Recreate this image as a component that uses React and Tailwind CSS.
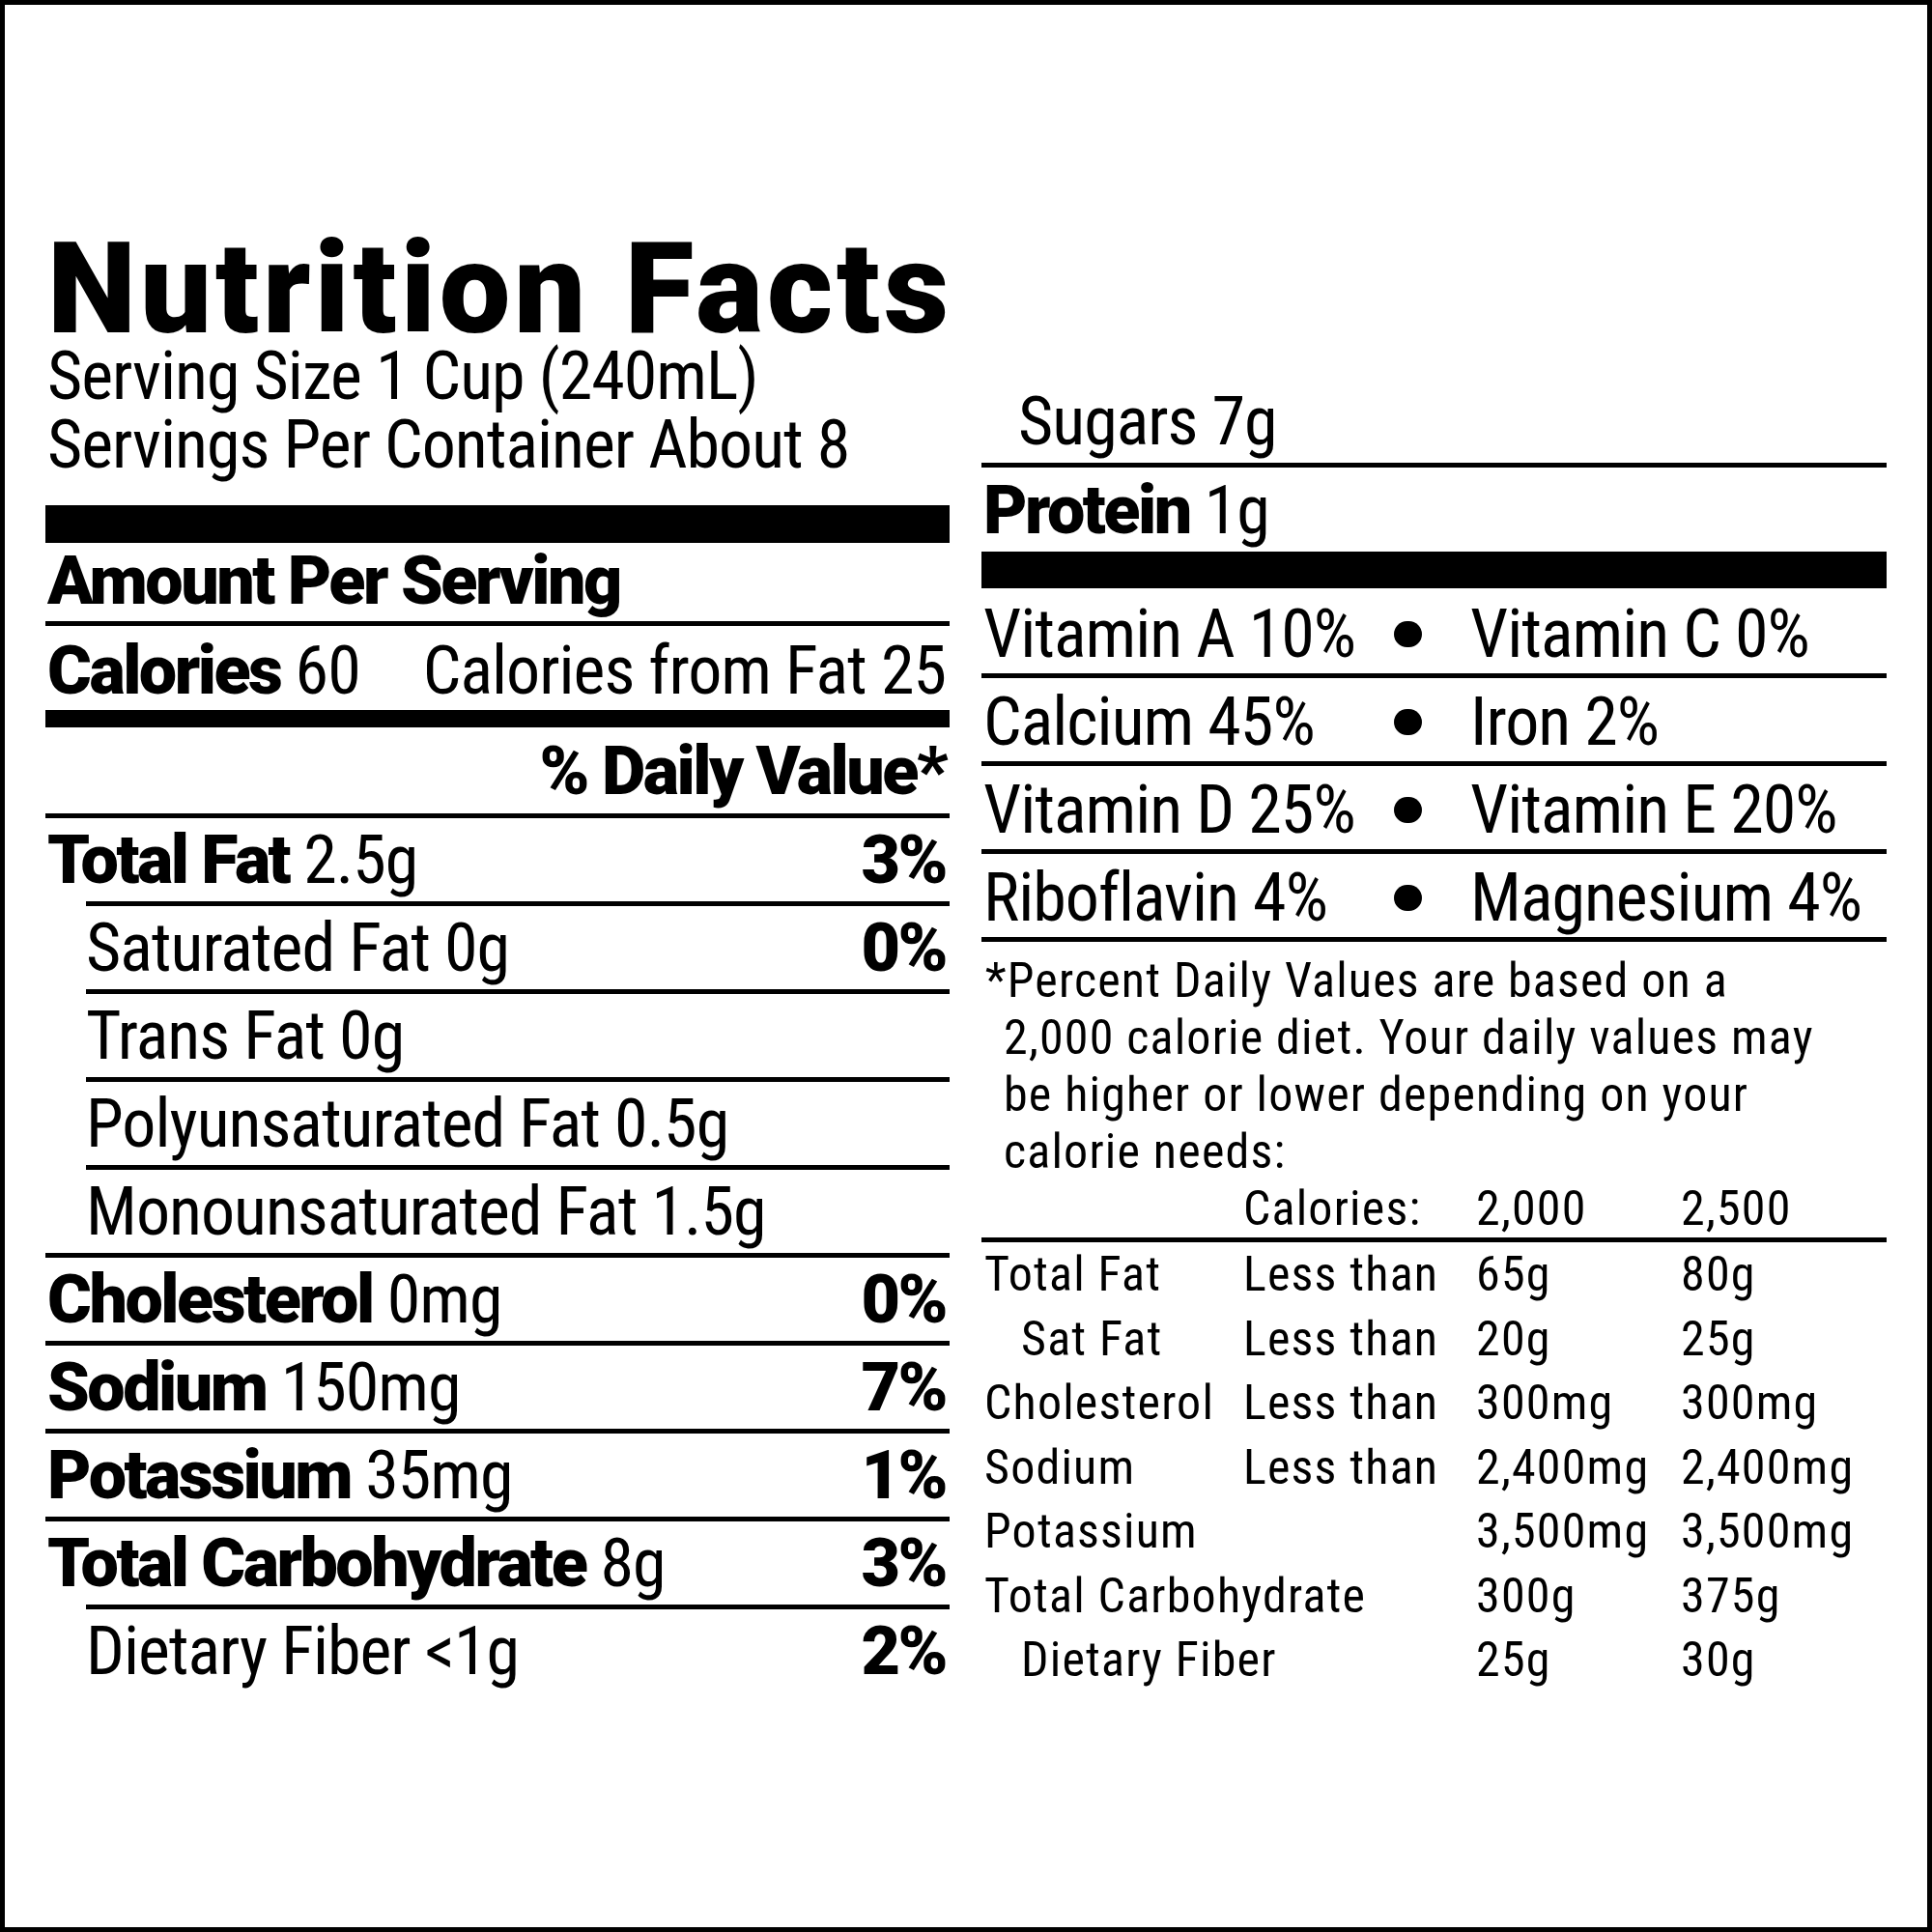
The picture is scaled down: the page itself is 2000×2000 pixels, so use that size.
const nutrients = [
  { label: "Total Fat", amount: "2.5g", dv: "3%", bold: true },
  { label: "Saturated Fat", amount: "0g", dv: "0%", sub: true },
  { label: "Trans Fat", amount: "0g", sub: true },
  { label: "Polyunsaturated Fat", amount: "0.5g", sub: true },
  { label: "Monounsaturated Fat", amount: "1.5g", sub: true },
  { label: "Cholesterol", amount: "0mg", dv: "0%", bold: true },
  { label: "Sodium", amount: "150mg", dv: "7%", bold: true },
  { label: "Potassium", amount: "35mg", dv: "1%", bold: true },
  { label: "Total Carbohydrate", amount: "8g", dv: "3%", bold: true },
  { label: "Dietary Fiber", amount: "<1g", dv: "2%", sub: true },
];

const vitamins = [
  ["Vitamin A 10%", "Vitamin C 0%"],
  ["Calcium 45%", "Iron 2%"],
  ["Vitamin D 25%", "Vitamin E 20%"],
  ["Riboflavin 4%", "Magnesium 4%"],
];

const limits = [
  { name: "Total Fat", less: true, a: "65g", b: "80g" },
  { name: "Sat Fat", less: true, a: "20g", b: "25g", sub: true },
  { name: "Cholesterol", less: true, a: "300mg", b: "300mg" },
  { name: "Sodium", less: true, a: "2,400mg", b: "2,400mg" },
  { name: "Potassium", a: "3,500mg", b: "3,500mg" },
  { name: "Total Carbohydrate", a: "300g", b: "375g" },
  { name: "Dietary Fiber", a: "25g", b: "30g", sub: true },
];

function B({ children }) {
  return <span className="font-black [font-stretch:100%] tracking-[-2.5px]">{children}</span>;
}

function NutrientRow({ item }) {
  return (
    <div
      className={
        "flex justify-between border-t-[5px] border-black pt-[8px] pb-[7px] pr-[4px] leading-[71px] " +
        (item.sub ? "ml-[42px]" : "pl-[2px]")
      }
    >
      <span>
        {item.bold ? <B>{item.label}</B> : item.label} {item.amount}
      </span>
      {item.dv && <B>{item.dv}</B>}
    </div>
  );
}

function VitaminRow({ pair, first }) {
  return (
    <div
      className={
        "flex items-center pl-[2px] leading-[71px] " +
        (first ? "pt-[12px] pb-[5px]" : "border-t-[5px] border-black pt-[10px] pb-[5px]")
      }
    >
      <span className="w-[425px]">{pair[0]}</span>
      <span className="h-[27px] w-[29px] rounded-full bg-black" />
      <span className="ml-[50px]">{pair[1]}</span>
    </div>
  );
}

export default function App() {
  return (
    <div className="flex h-[2000px] w-[2000px] items-start border-[5px] border-black bg-white text-black font-['Roboto',sans-serif] [font-stretch:75%] text-[70px] tracking-[-1px] whitespace-nowrap">
      {/* left column */}
      <div className="ml-[42px] w-[936px] pt-[239px]">
        <h1 className="pl-[2px] text-[131px] leading-[110px] font-black tracking-[4px] [font-stretch:100%]">
          Nutrition Facts
        </h1>
        <div className="pl-[2px] leading-[71px]">
          <div>Serving Size 1 Cup (240mL)</div>
          <div>Servings Per Container About 8</div>
        </div>
        <div className="mt-[27px] h-[39px] bg-black" />
        <div className="pl-[2px] pt-[4px] pb-[6px] leading-[71px]">
          <B>Amount Per Serving</B>
        </div>
        <div className="flex justify-between border-t-[5px] border-black pl-[2px] pr-[4px] pt-[11px] pb-[5px] leading-[71px]">
          <span>
            <B>Calories</B> 60
          </span>
          <span>Calories from Fat 25</span>
        </div>
        <div className="h-[18px] bg-black" />
        <div className="pt-[10px] pb-[8px] pr-[4px] text-right leading-[71px]">
          <B>% Daily Value*</B>
        </div>
        {nutrients.map((item) => (
          <NutrientRow key={item.label} item={item} />
        ))}
      </div>

      {/* right column */}
      <div className="ml-[33px] w-[937px] pt-[396px]">
        <div className="pl-[38px] pb-[7px] leading-[71px]">Sugars 7g</div>
        <div className="border-t-[5px] border-black pl-[2px] pt-[9px] pb-[7px] leading-[71px]">
          <B>Protein</B> 1g
        </div>
        <div className="h-[38px] bg-black" />
        {vitamins.map((pair, i) => (
          <VitaminRow key={pair[0]} pair={pair} first={i === 0} />
        ))}
        <div className="border-t-[5px] border-black pt-[11px] text-[50px] leading-[59px] tracking-[1.2px]">
          <p className="pl-[23px] indent-[-19px]">
            *Percent Daily Values are based on a
            <br />
            2,000 calorie diet. Your daily values may
            <br />
            be higher or lower depending on your
            <br />
            calorie needs:
          </p>
          <div className="grid grid-cols-[268px_241px_212px_1fr] border-b-[5px] border-black pl-[3px]">
            <span />
            <span>Calories:</span>
            <span>2,000</span>
            <span>2,500</span>
          </div>
          <div className="grid grid-cols-[268px_241px_212px_1fr] pl-[3px] leading-[66.5px]">
            {limits.map((r) => (
              <div key={r.name} className="contents">
                <span className={(r.sub ? "pl-[38px] " : "") + (r.less ? "" : "col-span-2")}>{r.name}</span>
                {r.less && <span>Less than</span>}
                <span>{r.a}</span>
                <span>{r.b}</span>
              </div>
            ))}
          </div>
        </div>
      </div>
    </div>
  );
}
